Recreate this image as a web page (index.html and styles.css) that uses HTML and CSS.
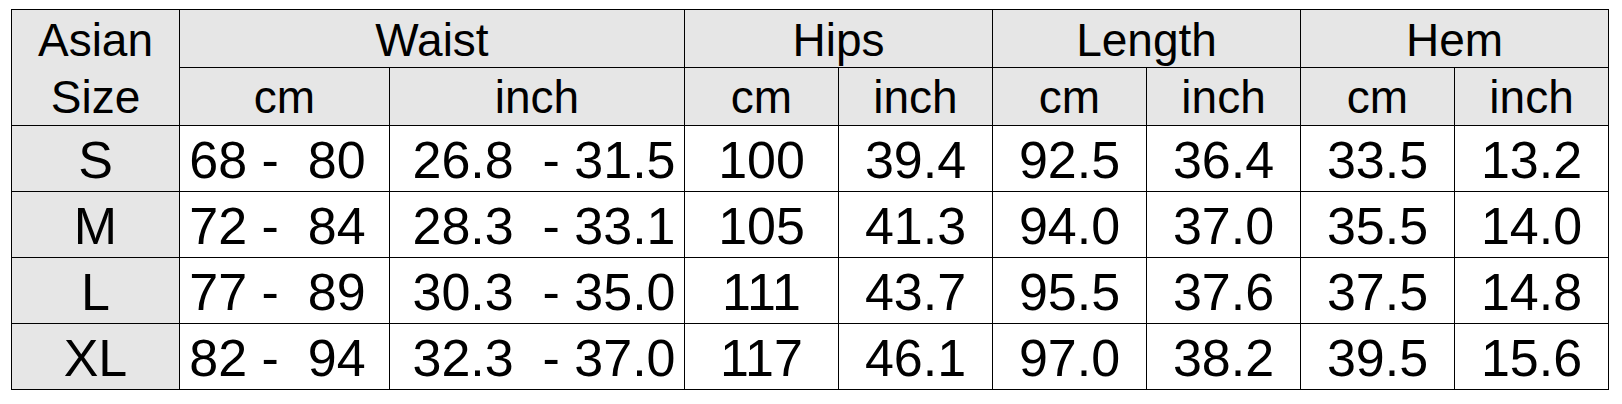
FILE: index.html
```html
<!DOCTYPE html>
<html lang="en">
<head>
<meta charset="utf-8">
<title>Size Chart</title>
<link rel="stylesheet" href="styles.css">
</head>
<body>
<table class="chart">
  <colgroup>
    <col class="c-size">
    <col class="c-wcm">
    <col class="c-win">
    <col class="c-n"><col class="c-n"><col class="c-n">
    <col class="c-n"><col class="c-n"><col class="c-n">
  </colgroup>
  <thead>
    <tr class="h1">
      <th class="size-head" rowspan="2">Asian<br>Size</th>
      <th colspan="2">Waist</th>
      <th colspan="2">Hips</th>
      <th colspan="2">Length</th>
      <th colspan="2">Hem</th>
    </tr>
    <tr class="h2">
      <th>cm</th><th>inch</th>
      <th>cm</th><th>inch</th>
      <th>cm</th><th>inch</th>
      <th>cm</th><th>inch</th>
    </tr>
  </thead>
  <tbody>
    <tr>
      <th class="size">S</th>
      <td class="wcm">68 -  80</td><td class="win">26.8  - 31.5</td>
      <td>100</td><td>39.4</td><td>92.5</td><td>36.4</td><td>33.5</td><td>13.2</td>
    </tr>
    <tr>
      <th class="size">M</th>
      <td class="wcm">72 -  84</td><td class="win">28.3  - 33.1</td>
      <td>105</td><td>41.3</td><td>94.0</td><td>37.0</td><td>35.5</td><td>14.0</td>
    </tr>
    <tr>
      <th class="size">L</th>
      <td class="wcm">77 -  89</td><td class="win">30.3  - 35.0</td>
      <td>111</td><td>43.7</td><td>95.5</td><td>37.6</td><td>37.5</td><td>14.8</td>
    </tr>
    <tr>
      <th class="size">XL</th>
      <td class="wcm">82 -  94</td><td class="win">32.3  - 37.0</td>
      <td>117</td><td>46.1</td><td>97.0</td><td>38.2</td><td>39.5</td><td>15.6</td>
    </tr>
  </tbody>
</table>
</body>
</html>
```
FILE: styles.css
```css
html, body {
  margin: 0;
  padding: 0;
  background: #ffffff;
}

body {
  font-family: "Liberation Sans", Arial, sans-serif;
  color: #000000;
}

.chart {
  margin: 9px 0 0 11px;
  width: 1598px;
  table-layout: fixed;
  border-collapse: separate;
  border-spacing: 1px;
  background: #000000;
}

.c-size { width: 167px; }
.c-wcm { width: 209px; }
.c-win { width: 294px; }
.c-n { width: 153px; }

.chart th,
.chart td {
  padding: 0;
  text-align: center;
  vertical-align: bottom;
  font-weight: normal;
  white-space: nowrap;
  overflow: hidden;
}

.chart thead th {
  background: #e6e6e6;
  font-size: 46px;
}

.h1 th {
  height: 57px;
  line-height: 53px;
}

.h2 th {
  height: 57px;
  line-height: 55px;
}

.chart .size-head {
  line-height: 56.5px;
}

.chart tbody th,
.chart tbody td {
  height: 65px;
  font-size: 52px;
  line-height: 61px;
  background: #ffffff;
}

.chart tbody th.size {
  background: #e6e6e6;
}

.chart .wcm {
  white-space: pre;
  padding-right: 14px;
}

.chart .win {
  white-space: pre;
  padding-left: 14px;
}
```
